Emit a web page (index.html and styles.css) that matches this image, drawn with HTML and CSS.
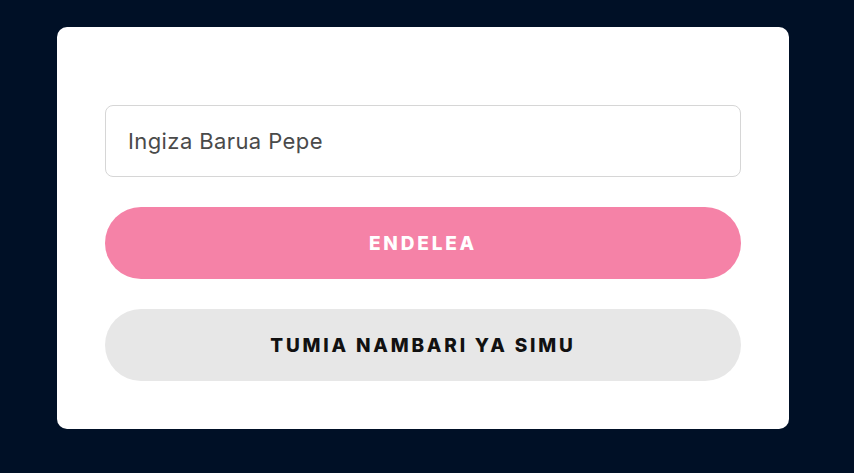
FILE: index.html
```html
<!DOCTYPE html>
<html lang="sw">
<head>
    <meta charset="UTF-8">
    <meta name="viewport" content="width=device-width, initial-scale=1.0">
    <title>Ingia</title>
    <link rel="stylesheet" href="styles.css">
</head>
<body>
    <main class="card">
        <form class="login-form">
            <input type="email" class="email-input" placeholder="Ingiza Barua Pepe">
            <button type="submit" class="btn btn-primary">ENDELEA</button>
            <button type="button" class="btn btn-secondary">TUMIA NAMBARI YA SIMU</button>
        </form>
    </main>
</body>
</html>
```

FILE: styles.css
```css
body {
    margin: 0;
    min-height: 100vh;
    background: #001026;
    font-family: Inter, Lato, Arial, sans-serif;
    padding: 27px 65px 0 57px;
    box-sizing: border-box;
}
.card {
    background: #fff;
    border-radius: 10px;
    width: 732px;
    box-sizing: border-box;
    padding: 78px 48px 48px;
}
.login-form {
    display: flex;
    flex-direction: column;
    gap: 30px;
}
.email-input {
    height: 72px;
    box-sizing: border-box;
    border: 1px solid #d6d6d6;
    border-radius: 8px;
    padding: 0 22px;
    font-family: inherit;
    font-size: 22px;
    letter-spacing: 0.4px;
    color: #444;
    outline: none;
}
.email-input::placeholder {
    color: #4a4a4a;
}
.btn {
    height: 72px;
    border: none;
    border-radius: 36px;
    font-family: inherit;
    font-size: 19px;
    font-weight: 800;
    letter-spacing: 2.8px;
    cursor: pointer;
}
.btn-primary {
    background: #f582a7;
    color: #fff;
}
.btn-secondary {
    background: #e7e7e7;
    color: #111;
}
```
